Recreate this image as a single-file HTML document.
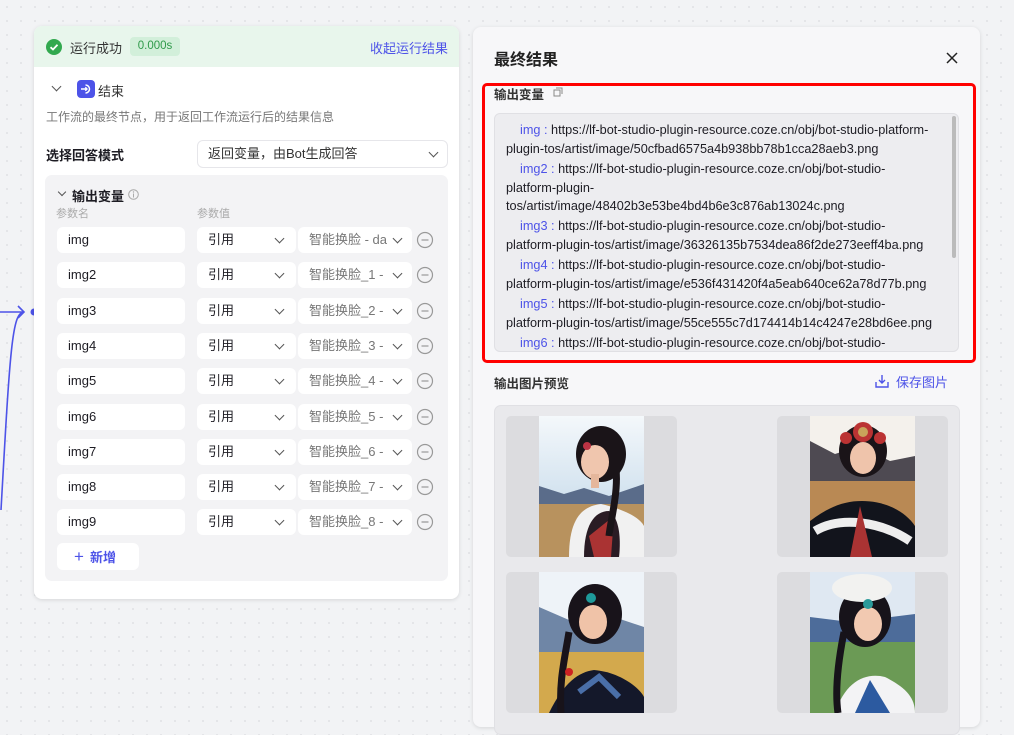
<!DOCTYPE html>
<html><head><meta charset="utf-8"><style>
*{box-sizing:border-box;margin:0;padding:0}
body{width:1014px;height:720px;overflow:hidden;background:#f2f3f5;background-image:radial-gradient(#dfe0e4 1px,transparent 1px);background-size:14px 14px;font-family:"Liberation Sans","Noto Sans CJK SC",sans-serif;color:#1d1c23;position:relative}
.abs{position:absolute}
#left{left:34px;top:26px;width:425px;height:573px;background:#fff;border-radius:8px;box-shadow:0 1px 4px rgba(0,0,0,.12);overflow:hidden}
.hdr{height:41px;background:#e8f6ec;position:relative}
.sel{background:#fff;border-radius:6px;position:absolute;height:26px;font-size:13px;line-height:26px;padding-left:11px;color:#1d1c23}
.chev{position:absolute;width:7px;height:7px;border-right:1.5px solid #555;border-bottom:1.5px solid #555;transform:rotate(45deg)}
#right{left:473px;top:27px;width:507px;height:700px;background:#f7f7f9;border-radius:8px;box-shadow:0 1px 4px rgba(0,0,0,.12)}
.code{font-size:12.7px;line-height:18.8px;color:#1d1c23;white-space:nowrap}
.code>div{margin-bottom:1.2px}
.k{color:#4d53e8;padding-left:14px}
.card{position:absolute;width:171px;height:141px;background:#dcdcdf;border-radius:5px;overflow:hidden}
.card svg{position:absolute;left:33px;top:0}
</style></head><body>
<svg class="abs" style="left:0;top:290px" width="45" height="220"><path d="M0 22 H24" stroke="#4d53e8" stroke-width="1.6" fill="none"/><path d="M18 16 L24 22 L18 28" stroke="#4d53e8" stroke-width="1.6" fill="none"/><path d="M24 22 C12 22 10 60 1 220" stroke="#4d53e8" stroke-width="1.6" fill="none"/><circle cx="34" cy="22" r="3.5" fill="#4d53e8"/></svg>

<div id="left" class="abs">
 <div class="hdr">
  <div class="abs" style="left:12px;top:13px;width:16px;height:16px;border-radius:50%;background:#32a94f"></div>
  <svg class="abs" style="left:12px;top:13px" width="16" height="16"><path d="M4.5 8.2 L7 10.5 L11.5 5.8" stroke="#fff" stroke-width="1.8" fill="none"/></svg>
  <div class="abs" style="left:36px;top:12px;font-size:13px;color:#333">运行成功</div>
  <div class="abs" style="left:96px;top:11px;width:50px;height:19px;background:#d2efda;border-radius:4px;font-size:11.5px;color:#2f9a4a;text-align:center;line-height:19px">0.000s</div>
  <div class="abs" style="right:11px;top:12px;font-size:13px;color:#4d53e8">收起运行结果</div>
 </div>
 <div class="chev" style="left:19px;top:57px"></div>
 <div class="abs" style="left:43px;top:54px;width:18px;height:18px;background:#4d53e8;border-radius:4px"></div>
 <svg class="abs" style="left:43px;top:54px" width="18" height="18"><path d="M8.5 5 A4 4 0 1 1 8.5 13" stroke="#fff" stroke-width="1.5" fill="none"/><path d="M4 9 H10 M8.3 7.3 L10 9 L8.3 10.7" stroke="#fff" stroke-width="1.4" fill="none"/></svg>
 <div class="abs" style="left:64px;top:55px;font-size:13px;color:#333">结束</div>
 <div class="abs" style="left:12px;top:82px;font-size:12px;color:#777">工作流的最终节点，用于返回工作流运行后的结果信息</div>
 <div class="abs" style="left:12px;top:119px;font-size:13px;font-weight:bold">选择回答模式</div>
 <div class="abs" style="left:163px;top:114px;width:251px;height:28px;border:1px solid #e6e6ea;border-radius:6px;font-size:13px;line-height:26px;padding-left:10px;color:#333">返回变量，由Bot生成回答</div>
 <div class="chev" style="left:396px;top:123px"></div>
 <div class="abs" style="left:11px;top:149px;width:403px;height:406px;background:#f3f3f5;border-radius:7px"></div>
 <div class="chev" style="left:25px;top:163px;width:6px;height:6px"></div>
 <div class="abs" style="left:38px;top:160px;font-size:13px;font-weight:bold">输出变量</div>
 <svg class="abs" style="left:94px;top:163px" width="11" height="11"><circle cx="5.5" cy="5.5" r="4.8" stroke="#aaa" fill="none"/><path d="M5.5 4.5 V8.5" stroke="#aaa"/><circle cx="5.5" cy="3" r=".7" fill="#aaa"/></svg>
 <div class="abs" style="left:22px;top:179px;font-size:11px;color:#aaa">参数名</div>
 <div class="abs" style="left:163px;top:179px;font-size:11px;color:#aaa">参数值</div>
 <div id="rows"></div>
 <div class="abs" style="left:23px;top:517px;width:82px;height:27px;background:#fff;border-radius:6px;font-size:13px;color:#4d53e8;line-height:27px;padding-left:17px;font-weight:bold"><span style="font-weight:normal;font-size:17px;margin-right:6px">+</span>新增</div>
</div>

<div id="right" class="abs">
 <div class="abs" style="left:21px;top:19px;font-size:16px;font-weight:bold;color:#222">最终结果</div>
 <svg class="abs" style="left:473px;top:25px" width="12" height="12"><path d="M1 1 L11 11 M11 1 L1 11" stroke="#222" stroke-width="1.5"/></svg>
 <div class="abs" style="left:9px;top:56px;width:494px;height:280px;border:3px solid #f00;border-radius:5px"></div>
 <div class="abs" style="left:21px;top:57px;font-size:12.5px;font-weight:bold;color:#333">输出变量</div>
 <svg class="abs" style="left:80px;top:60px" width="10" height="10"><rect x="1" y="3" width="6" height="6" stroke="#888" fill="none"/><path d="M3 1 H9 V7" stroke="#888" fill="none"/></svg>
 <div class="abs code" style="left:21px;top:86px;width:465px;height:239px;background:#ededf0;border:1px solid #e0e0e4;border-radius:6px;overflow:hidden;padding:7px 12px 0 11px">
  <div><span class="k">img : </span>https://lf-bot-studio-plugin-resource.coze.cn/obj/bot-studio-platform-<br>plugin-tos/artist/image/50cfbad6575a4b938bb78b1cca28aeb3.png</div>
  <div><span class="k">img2 : </span>https://lf-bot-studio-plugin-resource.coze.cn/obj/bot-studio-<br>platform-plugin-<br>tos/artist/image/48402b3e53be4bd4b6e3c876ab13024c.png</div>
  <div><span class="k">img3 : </span>https://lf-bot-studio-plugin-resource.coze.cn/obj/bot-studio-<br>platform-plugin-tos/artist/image/36326135b7534dea86f2de273eeff4ba.png</div>
  <div><span class="k">img4 : </span>https://lf-bot-studio-plugin-resource.coze.cn/obj/bot-studio-<br>platform-plugin-tos/artist/image/e536f431420f4a5eab640ce62a78d77b.png</div>
  <div><span class="k">img5 : </span>https://lf-bot-studio-plugin-resource.coze.cn/obj/bot-studio-<br>platform-plugin-tos/artist/image/55ce555c7d174414b14c4247e28bd6ee.png</div>
  <div><span class="k">img6 : </span>https://lf-bot-studio-plugin-resource.coze.cn/obj/bot-studio-</div>
  <div class="abs" style="right:2px;top:2px;width:4px;height:142px;background:#bbb;border-radius:2px"></div>
 </div>
 <div class="abs" style="left:21px;top:346px;font-size:12.5px;font-weight:bold;color:#333">输出图片预览</div>
 <svg class="abs" style="left:402px;top:347px" width="14" height="14"><path d="M1 8 V13 H13 V8 M7 1 V9 M4 6 L7 9 L10 6" stroke="#4d53e8" stroke-width="1.4" fill="none"/></svg>
 <div class="abs" style="left:423px;top:345px;font-size:13px;color:#4d53e8">保存图片</div>
 <div class="abs" style="left:21px;top:378px;width:466px;height:330px;background:#e9e9ec;border:1px solid #e0e0e4;border-radius:7px"></div>
</div>

<div class="card" style="left:506px;top:416px"><svg width="105" height="141" viewBox="0 0 105 141"><defs><linearGradient id="s1" x1="0" y1="0" x2="0" y2="1"><stop offset="0" stop-color="#f4f8fb"/><stop offset="1" stop-color="#b9d2e6"/></linearGradient></defs><rect width="105" height="141" fill="url(#s1)"/><path d="M0 70 L25 78 L45 72 L70 80 L105 68 V95 H0Z" fill="#5a6c8a"/><rect y="88" width="105" height="53" fill="#b8925e"/><path d="M30 141 C30 100 45 90 62 88 C80 92 100 100 105 110 V141Z" fill="#f1f1f1"/><path d="M45 141 C45 110 55 95 70 95 C85 105 80 141 80 141Z" fill="#2a1c24"/><path d="M50 120 L75 100 L72 141 H55Z" fill="#a33"/><ellipse cx="62" cy="38" rx="25" ry="28" fill="#1a1418"/><ellipse cx="56" cy="46" rx="14" ry="17" fill="#f0c6ae"/><rect x="52" y="58" width="8" height="14" fill="#e5b79c"/><path d="M75 40 C82 70 72 100 70 120" stroke="#1a1418" stroke-width="7" fill="none"/><circle cx="48" cy="30" r="4" fill="#b34"/></svg></div>
<div class="card" style="left:777px;top:416px"><svg width="105" height="141" viewBox="0 0 105 141"><rect width="105" height="141" fill="#f4f1ec"/><path d="M0 25 L25 38 L50 30 L80 45 L105 40 V80 H0Z" fill="#4e4a52"/><rect y="65" width="105" height="76" fill="#b98954"/><path d="M0 141 V105 C20 90 35 85 52 85 C75 85 95 95 105 110 V141Z" fill="#12141c"/><path d="M5 115 C30 100 70 105 100 125" stroke="#eee" stroke-width="9" fill="none"/><path d="M40 141 L50 90 L62 141Z" fill="#a33"/><ellipse cx="53" cy="35" rx="24" ry="26" fill="#1a1418"/><ellipse cx="53" cy="42" rx="13" ry="16" fill="#efc4ab"/><circle cx="53" cy="16" r="10" fill="#b33"/><circle cx="53" cy="16" r="5" fill="#c9a35a"/><circle cx="36" cy="22" r="6" fill="#b33"/><circle cx="70" cy="22" r="6" fill="#b33"/></svg></div>
<div class="card" style="left:506px;top:572px"><svg width="105" height="141" viewBox="0 0 105 141"><rect width="105" height="141" fill="#eef3f8"/><path d="M0 35 L30 48 L60 40 L105 55 V90 H0Z" fill="#6f86a6"/><rect y="80" width="105" height="61" fill="#d3a94d"/><path d="M10 141 C25 110 40 100 55 98 C80 100 100 115 105 125 V141Z" fill="#14182a"/><path d="M40 120 L60 105 L80 125" stroke="#4a6fa8" stroke-width="6" fill="none"/><ellipse cx="56" cy="42" rx="27" ry="30" fill="#18131a"/><ellipse cx="54" cy="50" rx="14" ry="17" fill="#f0c3a8"/><circle cx="52" cy="26" r="5" fill="#1e9a9a"/><path d="M30 60 C25 90 20 110 22 141" stroke="#18131a" stroke-width="7" fill="none"/><circle cx="30" cy="100" r="4" fill="#c22"/></svg></div>
<div class="card" style="left:777px;top:572px"><svg width="105" height="141" viewBox="0 0 105 141"><rect width="105" height="141" fill="#dfe8f2"/><path d="M0 45 L40 50 L105 42 V80 H0Z" fill="#4d6c9a"/><rect y="70" width="105" height="71" fill="#6b9a55"/><path d="M25 141 C35 110 55 100 75 105 C95 115 105 125 105 141Z" fill="#f3f3f5"/><path d="M45 141 L60 108 L80 141Z" fill="#2c5aa0"/><ellipse cx="55" cy="45" rx="26" ry="30" fill="#17131a"/><ellipse cx="58" cy="52" rx="14" ry="17" fill="#f2c9b1"/><ellipse cx="52" cy="16" rx="30" ry="14" fill="#f2f2f0"/><circle cx="58" cy="32" r="5" fill="#2a9a9a"/><path d="M34 60 C28 90 25 120 28 141" stroke="#17131a" stroke-width="7" fill="none"/></svg></div>

<script>
var h='';var names=['img','img2','img3','img4','img5','img6','img7','img8','img9'];
for(var i=0;i<9;i++){var t=Math.round(201+i*35.3);var r=i==0?'智能换脸 - da':'智能换脸_'+i+' -';
h+='<div class="sel" style="left:23px;top:'+t+'px;width:128px">'+names[i]+'</div>'+
'<div class="sel" style="left:163px;top:'+t+'px;width:99px">引用</div><div class="chev" style="left:242px;top:'+(t+8)+'px"></div>'+
'<div class="sel" style="left:264px;top:'+t+'px;width:114px;color:#777;padding-left:11px">'+r+'</div><div class="chev" style="left:360px;top:'+(t+8)+'px"></div>'+
'<svg class="abs" style="left:382px;top:'+(t+4)+'px" width="18" height="18"><circle cx="9" cy="9" r="7.5" stroke="#999" stroke-width="1.2" fill="none"/><path d="M5.5 9 H12.5" stroke="#999" stroke-width="1.2"/></svg>';}
document.getElementById('rows').outerHTML=h;
</script>
</body></html>
